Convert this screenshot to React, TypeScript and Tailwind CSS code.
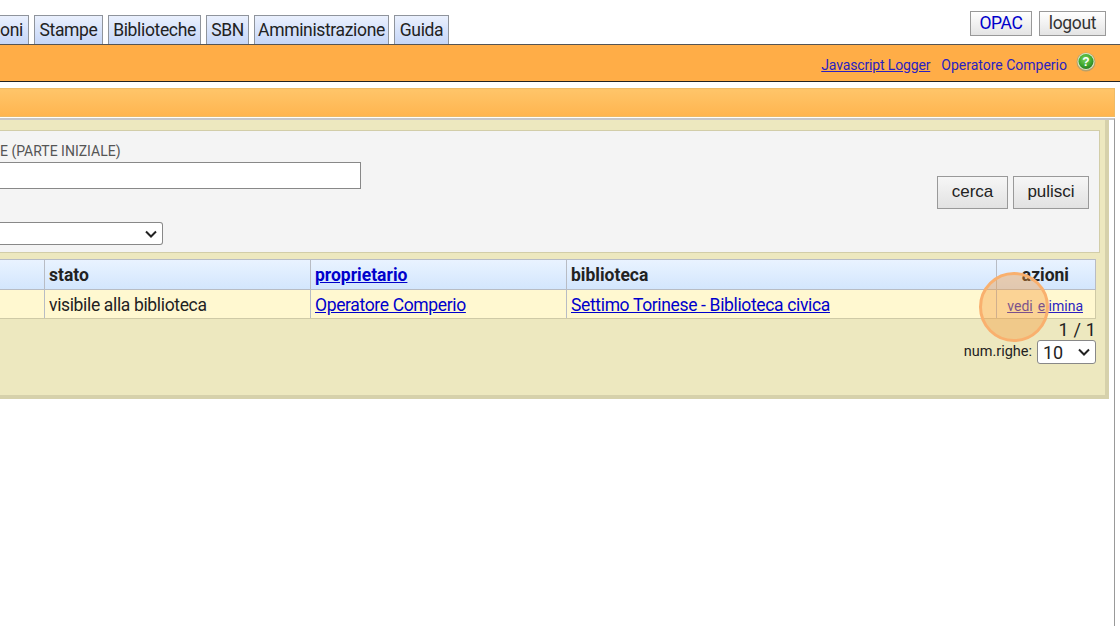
import React from 'react';

const tabs = [
    {label: 'Stampe', width: 'w-[69px]'},
    {label: 'Biblioteche', width: 'w-[93px]'},
    {label: 'SBN', width: 'w-[43px]'},
    {label: 'Amministrazione', width: 'w-[135px]'},
    {label: 'Guida', width: 'w-[55px]'},
];
const tabClass = 'h-[29px] border border-b-0 border-[#8f949c] bg-gradient-to-b from-[#eaf0fd] to-[#c5d6f8] pt-[2px] text-center text-[17.5px] leading-[24px] tracking-[-0.35px] text-[#222]';

export default function App() {
    return (
        <div className="h-[626px] w-[1120px] overflow-hidden bg-white font-['Roboto','Liberation_Sans',sans-serif] text-[#222]">
            <div className="flex h-[44px] items-end justify-between">
                <div className="flex gap-[5px]">
                    <div className={`${tabClass} w-[29px] border-l-0 pr-[6px] !text-right`}>oni</div>
                    {tabs.map(tab => <div key={tab.label} className={`${tabClass} ${tab.width}`}>{tab.label}</div>)}
                </div>
                <div className="mr-[14px] flex gap-[7px] self-start pt-[11px]">
                    <div className="flex h-[25px] w-[62px] items-center justify-center border border-[#999] bg-gradient-to-b from-white to-[#e4e4e4] text-[17.5px] tracking-[-0.35px] text-[#0000cc]">OPAC</div>
                    <div className="flex h-[25px] w-[67px] items-center justify-center border border-[#999] bg-gradient-to-b from-white to-[#e4e4e4] text-[17.5px] tracking-[-0.35px] text-[#333]">logout</div>
                </div>
            </div>
            <div className="flex h-[38px] items-center justify-end gap-[11px] border-t border-b border-t-[#555] border-b-[#222] bg-[#ffad47] pr-[24px] pt-[5px] text-[14px] text-[#2a1fc0]">
                <a className="tracking-[-0.15px] underline">Javascript Logger</a>
                <span>Operatore Comperio</span>
                <svg width="20" height="20" viewBox="0 0 20 20" className="-mt-[7px] -ml-[2px]">
                    <defs>
                        <radialGradient id="help" cx="45%" cy="35%" r="65%">
                            <stop offset="0%" stopColor="#7fd45f" />
                            <stop offset="65%" stopColor="#3fa82e" />
                            <stop offset="100%" stopColor="#2c7a22" />
                        </radialGradient>
                    </defs>
                    <circle cx="10" cy="10" r="9.5" fill="#9a9a7a" opacity="0.7" />
                    <circle cx="10" cy="9.5" r="8.5" fill="#d5e8c5" />
                    <circle cx="10" cy="9.5" r="7.5" fill="url(#help)" />
                    <text x="10" y="14" textAnchor="middle" fontSize="12" fontWeight="700" fontFamily="Liberation Sans, sans-serif" fill="#fff">?</text>
                </svg>
            </div>
            <div className="mt-[6px] mr-[5px] h-[29px] border border-l-0 border-[#eebb66] bg-gradient-to-b from-[#ffc569] to-[#ffb54f]"></div>
            <div className="mt-[1px] mr-[5px] h-[520px] border-t-2 border-r border-t-[#c8c8c8] border-r-[#999]">
                <div className="mr-[5px] h-[279px] border-r-[4px] border-b-[4px] border-[#d6d1ab] bg-[#ede8bf] pt-[10px]">
                    <div className="mr-[5px] flex h-[123px] border-t border-r border-b border-[#d2cda8] bg-[#f4f4f4]">
                        <div className="flex-1">
                            <div className="pt-[10px] text-[14px] leading-[20px] text-[#555]">E (PARTE INIZIALE)</div>
                            <div className="mt-[1px] h-[27px] w-[361px] border border-l-0 border-[#888] bg-white"></div>
                            <div className="mt-[33px] flex h-[23px] w-[163px] items-center justify-end rounded-r-[3px] border border-l-0 border-[#888] bg-white pr-[4px]">
                                <svg width="14" height="14" viewBox="0 0 14 14" fill="none" stroke="#222" strokeWidth="2"><path d="M2 4.5 7 9.5 12 4.5" /></svg>
                            </div>
                        </div>
                        <div className="mr-[10px] mt-[45px] flex gap-[5px]">
                            <div className="flex h-[33px] w-[71px] items-center justify-center border border-[#999] bg-gradient-to-b from-[#f6f6f6] to-[#e2e2e2] pb-[2px] font-['Liberation_Sans',sans-serif] text-[17px]">cerca</div>
                            <div className="flex h-[33px] w-[76px] items-center justify-center border border-[#999] bg-gradient-to-b from-[#f6f6f6] to-[#e2e2e2] pb-[2px] font-['Liberation_Sans',sans-serif] text-[17px]">pulisci</div>
                        </div>
                    </div>
                    <div className="mt-[6px] mr-[9px]">
                        <div className="flex h-[31px] border-t border-b border-r border-[#b8bcc4] bg-gradient-to-b from-[#e9f3ff] to-[#d3e6fd] text-[17.5px] font-bold leading-[30px]">
                            <div className="w-[45px] border-r border-[#b8bcc4]"></div>
                            <div className="w-[266px] border-r border-[#b8bcc4] pl-[4px]">stato</div>
                            <div className="w-[256px] border-r border-[#b8bcc4] pl-[4px] text-[#0000cc] underline">proprietario</div>
                            <div className="w-[430px] border-r border-[#b8bcc4] pl-[4px]">biblioteca</div>
                            <div className="flex-1 pr-[26px] text-right">azioni</div>
                        </div>
                        <div className="flex h-[29px] border-b border-r border-[#cfcaa6] bg-[#fff8d0] text-[17.5px] leading-[30px] tracking-[-0.35px]">
                            <div className="w-[45px] border-r border-[#b8bcc4]"></div>
                            <div className="w-[266px] border-r border-[#b8bcc4] pl-[4px]">visibile alla biblioteca</div>
                            <div className="w-[256px] border-r border-[#b8bcc4] pl-[4px] text-[#0000cc] underline">Operatore Comperio</div>
                            <div className="w-[430px] border-r border-[#b8bcc4] pl-[4px] text-[#0000cc] underline">Settimo Torinese - Biblioteca civica</div>
                            <div className="flex flex-1 justify-end gap-[5px] pr-[12px] text-[14px] leading-[32px] tracking-normal text-[#2a1fc0] underline">
                                <a>vedi</a>
                                <a>elimina</a>
                            </div>
                        </div>
                        <div className="pt-[1px] text-right text-[18px] leading-[20px] tracking-[0.2px]">1 / 1</div>
                        <div className="flex items-center justify-end gap-[5px]">
                            <span className="text-[14.5px]">num.righe:</span>
                            <div className="flex h-[24px] w-[59px] items-center justify-between rounded-[3px] border border-[#888] bg-white pl-[5px] pr-[4px] text-[18px]">
                                10
                                <svg width="14" height="14" viewBox="0 0 14 14" fill="none" stroke="#222" strokeWidth="2"><path d="M2 4.5 7 9.5 12 4.5" /></svg>
                            </div>
                        </div>
                    </div>
                </div>
            </div>
            <div className="absolute left-[979px] top-[272px] h-[70px] w-[70px] rounded-full border-[3px] border-[#f9b06e] bg-[#f59a3c]/40"></div>
        </div>
    );
}
